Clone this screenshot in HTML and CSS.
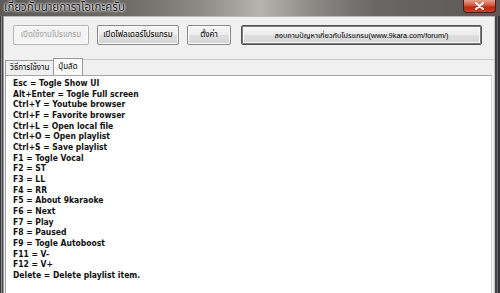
FILE: index.html
```html
<!DOCTYPE html>
<html lang="th">
<head>
<meta charset="utf-8">
<link rel="stylesheet" href="styles.css">
</head>
<body>
<div class="window">
  <div class="titlebar">
    <span class="title">เกี่ยวกับนายการาโอเกะครับ</span>
    <span class="close"><svg width="11" height="8" viewBox="0 0 11 8"><path d="M2 1 L9 7 M9 1 L2 7" stroke="#fff" stroke-width="2" stroke-linecap="round"/></svg></span>
  </div>
  <div class="frame">
    <div class="edge-left"></div>
    <div class="client">
      <div class="toolbar">
        <button class="btn b1" disabled>เปิดใช้งานโปรแกรม</button>
        <button class="btn b2">เปิดโฟลเดอร์โปรแกรม</button>
        <button class="btn b3">ตั้งค่า</button>
        <button class="btn b4 default">สอบถามปัญหาเกี่ยวกับโปรแกรม(www.9kara.com/forum/)</button>
      </div>
      <div class="tabs">
        <div class="tab">วิธีการใช้งาน</div>
        <div class="tab active">ปุ่มลัด</div>
        <div class="tabline"></div>
      </div>
      <div class="textbox">
        <div>Esc = Togle Show UI</div>
        <div>Alt+Enter = Togle Full screen</div>
        <div>Ctrl+Y = Youtube browser</div>
        <div>Ctrl+F = Favorite browser</div>
        <div>Ctrl+L = Open local file</div>
        <div>Ctrl+O = Open playlist</div>
        <div>Ctrl+S = Save playlist</div>
        <div>F1 = Togle Vocal</div>
        <div>F2 = ST</div>
        <div>F3 = LL</div>
        <div>F4 = RR</div>
        <div>F5 = About 9karaoke</div>
        <div>F6 = Next</div>
        <div>F7 = Play</div>
        <div>F8 = Paused</div>
        <div>F9 = Togle Autoboost</div>
        <div>F11 = V-</div>
        <div>F12 = V+</div>
        <div>Delete = Delete playlist item.</div>
      </div>
    </div>
    <div class="edge-right"></div>
  </div>
</div>
</body>
</html>
```
FILE: styles.css
```css
html, body {
  margin: 0;
  padding: 0;
}
body {
  width: 500px;
  height: 293px;
  overflow: hidden;
  background: #4a4a4c;
  font-family: "Liberation Sans", "Noto Sans Thai", sans-serif;
}
.window {
  display: flex;
  flex-direction: column;
  height: 293px;
}
.titlebar {
  height: 16px;
  flex: none;
  display: flex;
  align-items: flex-start;
  justify-content: space-between;
  background: linear-gradient(90deg, #5d5a58 0%, #6e6a66 25%, #8d8985 40%, #b7b3ae 52%, #8f8b87 62%, #6a6664 75%, #5a5858 100%);
}
.title {
  margin: 1px 0 0 4px;
  font-size: 11.5px;
  line-height: 13px;
  color: #111;
  text-shadow: 0 0 3px #fff, 0 0 2px #fff, 0 0 1px #fff;
}
.close {
  width: 33px;
  height: 13px;
  margin-right: 4px;
  border: 1px solid #4a1a14;
  border-top: none;
  border-radius: 0 0 4px 4px;
  background: linear-gradient(#e8a08e 0%, #d2553c 45%, #b52a14 60%, #c9462a 100%);
  display: flex;
  align-items: center;
  justify-content: center;
  box-sizing: border-box;
}
.frame {
  flex: 1;
  display: flex;
}
.edge-left {
  width: 4px;
  background: linear-gradient(90deg, #3c3c3e 0, #3c3c3e 1px, #8d8d90 1px, #8d8d90 2px, #4a4a4c 2px, #4a4a4c 3px, #9a9a9c 3px);
}
.edge-right {
  width: 6px;
  background: linear-gradient(90deg, #c8c8ca 0, #c8c8ca 1px, #434346 1px, #434346 3px, #6b6b6e 3px, #6b6b6e 4px, #333336 4px);
}
.client {
  flex: 1;
  background: #f0f0f0;
  display: flex;
  flex-direction: column;
  border-top: 1px solid #b9b9b9;
}
.toolbar {
  display: flex;
  padding: 8px 0 0 9px;
  height: 20px;
}
.btn {
  height: 20px;
  box-sizing: border-box;
  margin: 0;
  padding: 0;
  border: 1px solid #8a8a8a;
  border-radius: 2px;
  background: linear-gradient(#f6f6f6, #ececec 50%, #dedede 51%, #d6d6d6);
  font-family: "Liberation Sans", "Noto Sans Thai", sans-serif;
  font-size: 8px;
  color: #000;
  box-shadow: inset 0 0 0 1px #fbfbfb;
}
.btn[disabled] {
  color: #9c9c9c;
  border-color: #b4b4b4;
  background: #f4f4f4;
}
.b1 { width: 76px; }
.b2 { width: 82px; margin-left: 8px; }
.b3 { width: 44px; margin-left: 8px; }
.b4 { width: 241px; margin-left: 10px; font-size: 7.4px; }
.btn.default {
  border-color: #555;
  box-shadow: inset 0 0 0 1px #7a7a7a, inset 0 0 0 2px #f8f8f8;
}
.tabs {
  display: flex;
  align-items: flex-end;
  margin-top: 13px;
  height: 17px;
  padding-left: 1px;
}
.tab {
  height: 15px;
  box-sizing: border-box;
  padding: 0 4px;
  border: 1px solid #a0a0a0;
  border-bottom: none;
  font-size: 8px;
  line-height: 14px;
  color: #000;
  background: #f0f0f0;
}
.tab.active {
  height: 17px;
  background: #fafafa;
  margin-left: -1px;
  border-color: #9a9a9a;
  line-height: 16px;
}
.tabline {
  flex: 1;
  align-self: flex-start;
  border-top: 1px solid #c8c8c8;
  margin-top: 1px;
}
.textbox {
  flex: 1;
  margin: 0 2px 0 1px;
  background: #fff;
  border: 1px solid #a5a5a5;
  border-right-color: #d8d8d8;
  border-bottom: none;
  padding: 2px 0 0 7px;
  font-family: "DejaVu Sans Condensed", "DejaVu Sans", sans-serif;
  font-stretch: condensed;
  font-weight: bold;
  font-size: 8.5px;
  line-height: 10.67px;
  color: #111;
}
```
